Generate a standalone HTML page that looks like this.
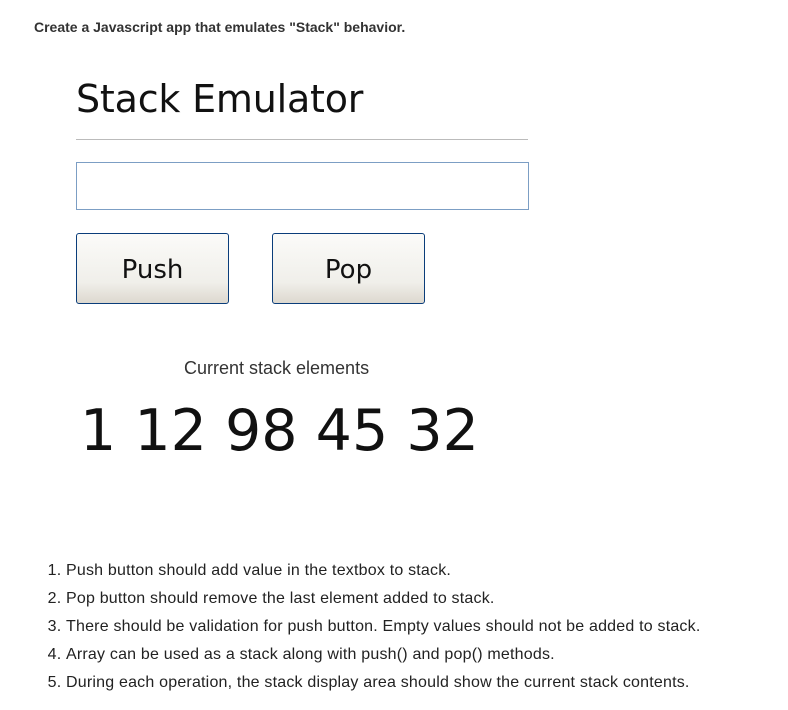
<!DOCTYPE html>
<html><head><style>
body{margin:0;width:788px;height:710px;background:#fff;position:relative;font-family:"Liberation Sans",sans-serif;color:#222}
.a{position:absolute}
.btn{position:absolute;top:233px;width:153px;height:71px;border:1px solid #0a3d7a;border-radius:3px;background:linear-gradient(#fbfbf9,#f0efea 70%,#ddd8cf);font-family:"DejaVu Sans",sans-serif;font-size:26px;color:#111;text-align:center;line-height:73px;box-sizing:border-box}
ol{position:absolute;left:26px;top:560px;margin:0;padding-left:40px;font-size:16px;letter-spacing:0.2px;color:#222}
li{height:28px;line-height:22px}
</style></head><body>
<div class="a" style="left:34px;top:19px;font-size:14px;font-weight:bold;color:#333">Create a Javascript app that emulates "Stack" behavior.</div>
<div class="a" style="left:76px;top:77px;font-family:'DejaVu Sans',sans-serif;font-size:38px;color:#111;letter-spacing:-0.2px">Stack Emulator</div>
<div class="a" style="left:76px;top:139px;width:452px;height:1px;background:#bbb"></div>
<div class="a" style="left:76px;top:162px;width:451px;height:46px;border:1px solid #7c9ec4"></div>
<div class="btn" style="left:76px">Push</div>
<div class="btn" style="left:272px">Pop</div>
<div class="a" style="left:184px;top:358px;font-size:18px;color:#333">Current stack elements</div>
<div class="a" style="left:80px;top:398px;font-family:'DejaVu Sans',sans-serif;font-size:57px;color:#111">1 12 98 45 32</div>
<ol>
<li>Push button should add value in the textbox to stack.</li>
<li>Pop button should remove the last element added to stack.</li>
<li>There should be validation for push button. Empty values should not be added to stack.</li>
<li>Array can be used as a stack along with push() and pop() methods.</li>
<li>During each operation, the stack display area should show the current stack contents.</li>
</ol>
</body></html>
